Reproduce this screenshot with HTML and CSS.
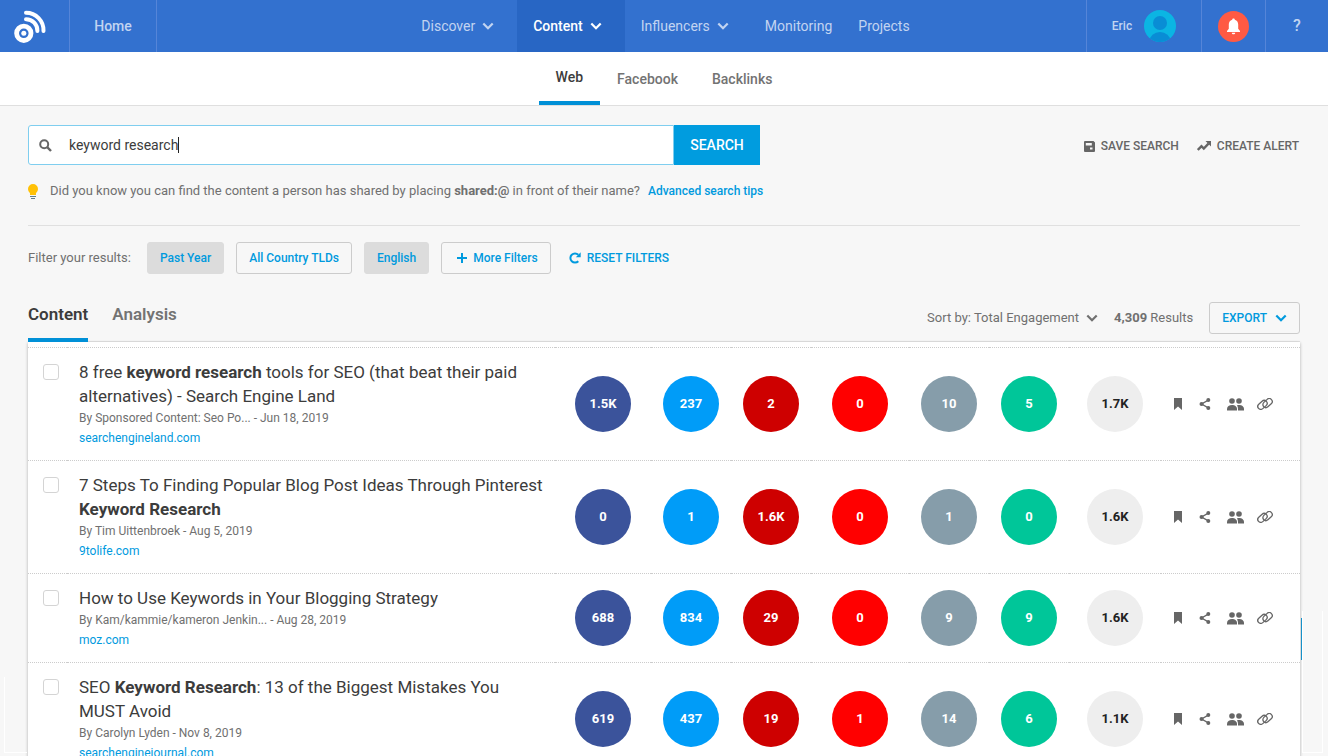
FILE: index.html
```html
<!DOCTYPE html>
<html lang="en">
<head>
<meta charset="utf-8">
<meta name="viewport" content="width=device-width, initial-scale=1">
<title>Content – keyword research</title>
<link rel="stylesheet" href="styles.css">
</head>
<body>
<svg class="sprite" aria-hidden="true">
  <symbol id="chevron" viewBox="0 0 12 8"><path d="M1.300 1.500 6 6.200l4.700-4.700" fill="none" stroke="currentColor" stroke-width="2.200"/></symbol>
  <symbol id="bookmark" viewBox="0 0 8 12"><path d="M0 0h8v12L4 8.500 0 12z" fill="currentColor"/></symbol>
  <symbol id="share" viewBox="0 0 12 12"><g fill="currentColor"><circle cx="2.600" cy="6" r="2.100"/><circle cx="9.300" cy="2.100" r="2"/><circle cx="9.300" cy="9.900" r="2"/></g><path d="M9.300 2.100 2.600 6l6.700 3.900" fill="none" stroke="currentColor" stroke-width="1.300"/></symbol>
  <symbol id="people" viewBox="0 0 17 13"><g fill="currentColor"><circle cx="5" cy="3" r="2.800"/><circle cx="12" cy="3" r="2.800"/><path d="M0 12.500V11c0-2.500 2.300-4 5-4s5 1.500 5 4v1.500z"/><path d="M10 7.300c.6-.2 1.300-.3 2-.3 2.700 0 5 1.500 5 4v1.500h-6V11c0-1.500-.4-2.700-1-3.700z"/></g></symbol>
  <symbol id="link" viewBox="0 0 16 12"><g fill="none" stroke="currentColor" stroke-width="1.300"><rect x="0.200" y="3.900" width="10.500" height="6" rx="3" transform="rotate(-42 5.450 6.900)"/><rect x="5.300" y="2.100" width="10.500" height="6" rx="3" transform="rotate(-42 10.550 5.100)"/></g></symbol>
</svg>

<header class="topbar">
  <div class="topbar-left">
    <a class="logo" href="#" aria-label="Dashboard">
      <svg width="32" height="34" viewBox="0 0 32 34"><g fill="none" stroke="#fff"><circle cx="9.800" cy="24.300" r="7.200" stroke-width="4.800"/><path d="M12 3.800A17.500 17.500 0 0 1 29.500 22" stroke-width="4" stroke-linecap="round"/><path d="M12 10.200A11.400 11.400 0 0 1 23.400 22" stroke-width="4" stroke-linecap="round"/></g><circle cx="9.800" cy="24.300" r="2.500" fill="#fff"/></svg>
    </a>
    <a class="home" href="#">Home</a>
  </div>
  <nav class="mainnav">
    <a class="has-menu" href="#">Discover <svg class="chev"><use href="#chevron"/></svg></a>
    <a class="has-menu active" href="#">Content <svg class="chev"><use href="#chevron"/></svg></a>
    <a class="has-menu" href="#">Influencers <svg class="chev"><use href="#chevron"/></svg></a>
    <a href="#">Monitoring</a>
    <a href="#">Projects</a>
  </nav>
  <div class="topbar-right">
    <a class="user" href="#">Eric
      <svg width="32" height="32" viewBox="0 0 32 32"><clipPath id="face"><circle cx="16" cy="16" r="16"/></clipPath><g clip-path="url(#face)"><path fill="#0bb5e3" d="M0 0h32v32H0z"/><circle cx="16" cy="13" r="7" fill="#098dd5"/><ellipse cx="16" cy="31" rx="10.500" ry="9" fill="#098dd5"/></g></svg>
    </a>
    <button class="alerts" type="button" aria-label="Notifications">
      <svg width="31" height="31" viewBox="0 0 31 31"><circle cx="15.500" cy="15.500" r="15.500" fill="#ff5a43"/><path fill="#fff" d="M15.500 7.500c.8 0 1.300.5 1.300 1.200 2.300.6 3.400 2.500 3.400 4.800v4.300l1.800 2.200v1H9v-1l1.800-2.200v-4.300c0-2.300 1.100-4.200 3.400-4.800 0-.7.5-1.200 1.300-1.200zM13.800 21.800h3.400c0 1-.8 1.500-1.700 1.500s-1.700-.5-1.700-1.500z"/></svg>
    </button>
    <a class="help" href="#">?</a>
  </div>
</header>

<nav class="subnav">
  <a class="active" href="#">Web</a>
  <a href="#">Facebook</a>
  <a href="#">Backlinks</a>
</nav>

<main class="page">
  <div class="search-row">
    <form class="search">
      <label class="search-box">
        <svg width="13" height="13" viewBox="0 0 13 13" aria-hidden="true"><g fill="none" stroke="#666" stroke-width="2"><circle cx="5.200" cy="5.200" r="4"/><path d="m8.200 8.200 3.800 3.800" stroke-width="2.400"/></g></svg>
        <input type="text" value="keyword research" aria-label="Search">
        <span class="caret"></span>
      </label>
      <button type="submit">SEARCH</button>
    </form>
    <div class="search-actions">
      <a href="#"><svg width="11" height="11" viewBox="0 0 11 11"><path fill="#666" fill-rule="evenodd" d="M1 0h8.500L11 1.500V10a1 1 0 0 1-1 1H1a1 1 0 0 1-1-1V1a1 1 0 0 1 1-1zm.8 2v2.500h6V2zM6 6.500v2h2.500v-2z"/></svg>SAVE SEARCH</a>
      <a href="#"><svg width="14" height="10" viewBox="0 0 14 10"><path fill="none" stroke="#666" stroke-width="2.400" d="m.8 9 3.700-3.800 2.300 2.300 4.700-4.800"/><path fill="#666" d="M8.500 0H14v5.500z"/></svg>CREATE ALERT</a>
    </div>
  </div>

  <p class="tip">
    <svg width="10" height="15" viewBox="0 0 10 15"><path fill="#ffc107" d="M5 0a5 5 0 0 1 5 5c0 2-1.200 3-2 4.200V11H2V9.200C1.200 8 0 7 0 5a5 5 0 0 1 5-5z"/><path fill="#607d8b" d="M2 12h6v1H2zM3 14h4v1H3z"/></svg>
    <span>Did you know you can find the content a person has shared by placing <b>shared:@</b> in front of their name?</span>
    <a href="#">Advanced search tips</a>
  </p>

  <div class="filters">
    <span class="filters-label">Filter your results:</span>
    <button class="chip on" type="button">Past Year</button>
    <button class="chip" type="button">All Country TLDs</button>
    <button class="chip on" type="button">English</button>
    <button class="chip more" type="button"><svg width="10" height="10" viewBox="0 0 10 10"><path d="M5 0v10M0 5h10" stroke="currentColor" stroke-width="2"/></svg>More Filters</button>
    <button class="reset" type="button"><svg width="12" height="12" viewBox="0 0 12 12"><path fill="none" stroke="currentColor" stroke-width="2" d="M9.300 9.200A4.600 4.600 0 1 1 9.300 2.800"/><path fill="currentColor" d="M11.700.3v5H6.800z"/></svg>RESET FILTERS</button>
  </div>

  <div class="results-head">
    <nav class="tabs">
      <a class="active" href="#">Content</a>
      <a href="#">Analysis</a>
    </nav>
    <div class="tools">
      <button class="sort" type="button">Sort by: Total Engagement <svg class="chev"><use href="#chevron"/></svg></button>
      <span><b>4,309</b> Results</span>
      <button class="chip export" type="button">EXPORT <svg class="chev"><use href="#chevron"/></svg></button>
    </div>
  </div>

  <table class="results">
    <colgroup><col class="c-check"><col><col class="c-fb"><col class="c-num"><col class="c-num"><col class="c-wide"><col class="c-num"><col class="c-num"><col class="c-total"><col class="c-act"></colgroup>
    <tbody>
      <tr>
        <td class="check"><input type="checkbox" aria-label="Select result"></td>
        <td class="info"><h3>8 free <b>keyword research</b> tools for SEO (that beat their paid alternatives) - Search Engine Land</h3><p>By Sponsored Content: Seo Po... - Jun 18, 2019</p><a href="#">searchengineland.com</a></td>
        <td><span class="dot facebook">1.5K</span></td><td><span class="dot twitter">237</span></td><td><span class="dot pinterest">2</span></td><td><span class="dot reddit">0</span></td><td><span class="dot links">10</span></td><td><span class="dot evergreen">5</span></td><td><span class="dot total">1.7K</span></td>
        <td><div class="actions"><button type="button" aria-label="Bookmark"><svg width="8" height="12"><use href="#bookmark"/></svg></button><button type="button" aria-label="Share"><svg width="12" height="12"><use href="#share"/></svg></button><button type="button" aria-label="View sharers"><svg width="17" height="13"><use href="#people"/></svg></button><button type="button" aria-label="View backlinks"><svg width="16" height="12"><use href="#link"/></svg></button></div></td>
      </tr>
      <tr>
        <td class="check"><input type="checkbox" aria-label="Select result"></td>
        <td class="info"><h3>7 Steps To Finding Popular Blog Post Ideas Through Pinterest <b>Keyword Research</b></h3><p>By Tim Uittenbroek - Aug 5, 2019</p><a href="#">9tolife.com</a></td>
        <td><span class="dot facebook">0</span></td><td><span class="dot twitter">1</span></td><td><span class="dot pinterest">1.6K</span></td><td><span class="dot reddit">0</span></td><td><span class="dot links">1</span></td><td><span class="dot evergreen">0</span></td><td><span class="dot total">1.6K</span></td>
        <td><div class="actions"><button type="button" aria-label="Bookmark"><svg width="8" height="12"><use href="#bookmark"/></svg></button><button type="button" aria-label="Share"><svg width="12" height="12"><use href="#share"/></svg></button><button type="button" aria-label="View sharers"><svg width="17" height="13"><use href="#people"/></svg></button><button type="button" aria-label="View backlinks"><svg width="16" height="12"><use href="#link"/></svg></button></div></td>
      </tr>
      <tr>
        <td class="check"><input type="checkbox" aria-label="Select result"></td>
        <td class="info"><h3>How to Use Keywords in Your Blogging Strategy</h3><p>By Kam/kammie/kameron Jenkin... - Aug 28, 2019</p><a href="#">moz.com</a></td>
        <td><span class="dot facebook">688</span></td><td><span class="dot twitter">834</span></td><td><span class="dot pinterest">29</span></td><td><span class="dot reddit">0</span></td><td><span class="dot links">9</span></td><td><span class="dot evergreen">9</span></td><td><span class="dot total">1.6K</span></td>
        <td><div class="actions"><button type="button" aria-label="Bookmark"><svg width="8" height="12"><use href="#bookmark"/></svg></button><button type="button" aria-label="Share"><svg width="12" height="12"><use href="#share"/></svg></button><button type="button" aria-label="View sharers"><svg width="17" height="13"><use href="#people"/></svg></button><button type="button" aria-label="View backlinks"><svg width="16" height="12"><use href="#link"/></svg></button></div></td>
      </tr>
      <tr>
        <td class="check"><input type="checkbox" aria-label="Select result"></td>
        <td class="info"><h3>SEO <b>Keyword Research</b>: 13 of the Biggest Mistakes You MUST Avoid</h3><p>By Carolyn Lyden - Nov 8, 2019</p><a href="#">searchenginejournal.com</a></td>
        <td><span class="dot facebook">619</span></td><td><span class="dot twitter">437</span></td><td><span class="dot pinterest">19</span></td><td><span class="dot reddit">1</span></td><td><span class="dot links">14</span></td><td><span class="dot evergreen">6</span></td><td><span class="dot total">1.1K</span></td>
        <td><div class="actions"><button type="button" aria-label="Bookmark"><svg width="8" height="12"><use href="#bookmark"/></svg></button><button type="button" aria-label="Share"><svg width="12" height="12"><use href="#share"/></svg></button><button type="button" aria-label="View sharers"><svg width="17" height="13"><use href="#people"/></svg></button><button type="button" aria-label="View backlinks"><svg width="16" height="12"><use href="#link"/></svg></button></div></td>
      </tr>
    </tbody>
  </table>
</main>
<div class="edge edge-left"></div>
<div class="edge edge-right"></div>
<div class="edge-mark"></div>
</body>
</html>
```

FILE: styles.css
```css
* { box-sizing: border-box; }
html, body { height: 100%; }
body { margin: 0; overflow: hidden; background: #f7f7f7; color: #666; font: 13px/20px Roboto, "Liberation Sans", sans-serif; }
a { color: inherit; text-decoration: none; }
button { margin: 0; padding: 0; border: 0; background: none; color: inherit; font: inherit; cursor: pointer; }
svg { flex: none; display: block; }
p, h3 { margin: 0; }
.sprite { position: absolute; width: 0; height: 0; }
.chev { width: 12px; height: 8px; }

.topbar { display: grid; grid-template-columns: 1fr auto 1fr; height: 52px; background: #3371cf; color: #c2d4f1; font-size: 14px; }
.topbar-left, .topbar-right, .mainnav { display: flex; }
.topbar-right { justify-content: flex-end; }
.topbar a, .alerts { display: flex; align-items: center; justify-content: center; }
.logo { width: 70px; padding-right: 10px; border-right: 1px solid #5585d8; }
.home { width: 87px; border-right: 1px solid #5585d8; font-weight: 500; }
.mainnav a { padding: 0 13px; }
.mainnav .has-menu { gap: 7px; padding: 0 23px 0 16px; }
.mainnav .active { background: #2866c4; color: #fff; font-weight: 500; }
.topbar-right > * { border-left: 1px solid #5585d8; }
.user { gap: 12px; width: 115px; font-size: 12px; font-weight: 500; }
.alerts { width: 64px; }
.help { width: 63px; font-size: 16px; font-weight: 500; }

.subnav { display: flex; justify-content: center; height: 54px; background: #fff; border-bottom: 1px solid #dfdfdf; font-size: 14px; font-weight: 500; color: #737373; }
.subnav a { display: flex; align-items: center; padding: 0 17px; }
.subnav .active { color: #3c3c3c; border-bottom: 4px solid #0090d7; }

.page { padding: 19px 28px 0; }
.search-row { display: flex; justify-content: space-between; align-items: center; gap: 28px; }
.search { display: flex; flex: 0 1 732px; height: 40px; }
.search-box { display: flex; flex: 1; align-items: center; padding-left: 10px; background: #fff; border: 1px solid #7fceef; border-radius: 3px 0 0 3px; cursor: text; }
.search-box input { field-sizing: content; height: 36px; margin-left: 17px; padding: 0; border: 0; outline: 0; background: none; color: #3c3c3c; caret-color: transparent; font: inherit; font-size: 14px; }
.caret { width: 1px; height: 16px; background: #222; }
.search button { width: 86px; background: #009cdf; color: #fff; font-size: 14px; font-weight: 500; }
.search-actions { display: flex; gap: 18px; padding: 2px 1px 0 0; font-size: 12px; font-weight: 500; }
.search-actions a { display: flex; align-items: center; gap: 6px; }

.tip { display: flex; align-items: center; gap: 8px; margin-top: 16px; padding-bottom: 24px; border-bottom: 1px solid #e0e0e0; color: #707070; }
.tip svg { margin-right: 4px; }
.tip a { color: #009ade; font-size: 12px; font-weight: 500; }

.filters { display: flex; align-items: center; margin-top: 16px; gap: 12px; }
.filters-label { margin-right: 4px; color: #707070; }
.chip { display: flex; align-items: center; justify-content: center; gap: 6px; height: 32px; padding: 0 12px; border: 1px solid #ccc; border-radius: 3px; color: #009ade; font-size: 12px; font-weight: 500; }
.chip.on { background: #dcdcdc; border-color: #dcdcdc; }
.more { padding-left: 15px; }
.export { gap: 8px; }
.reset { display: flex; align-items: center; gap: 6px; margin-left: 6px; color: #009ade; font-size: 12px; font-weight: 500; }

.results-head { display: flex; justify-content: space-between; margin-top: 28px; border-bottom: 1px solid #e4e4e4; }
.tabs { display: flex; gap: 24px; height: 40px; margin-bottom: -1px; font-size: 17px; font-weight: 600; line-height: 24px; color: #737373; }
.tabs a { height: 40px; }
.tabs .active { color: #3c3c3c; border-bottom: 4px solid #0090d7; }
.tools { display: flex; align-items: center; gap: 16px; height: 32px; color: #707070; }
.sort { display: flex; align-items: center; gap: 7px; }

.results { width: 100%; padding-top: 5px; table-layout: fixed; border-spacing: 0; background: #fff; box-shadow: 0 1px 3px #0000004d; }
.c-check { width: 39px; }
.c-fb { width: 96px; }
.c-num { width: 80px; }
.c-wide { width: 98px; }
.c-total { width: 92px; }
.c-act { width: 139px; }
.results td { padding: 0; border-top: 1px dotted #ccc; vertical-align: middle; }
.results .check { padding: 16px 0 0 15px; vertical-align: top; }
.check input { display: block; appearance: none; width: 16px; height: 16px; margin: 0; border: 1px solid #d4d4d4; border-radius: 3px; background: #fff; }
.results .info { padding: 12px 8px 12px 12px; }
.info h3 { color: #3c3c3c; font-size: 17px; font-weight: 400; line-height: 24px; }
.info p { font-size: 12px; color: #707070; }
.info a { display: block; width: fit-content; color: #009ade; font-size: 12px; }
.dot { display: flex; align-items: center; justify-content: center; width: 56px; height: 56px; margin: 0 auto; border-radius: 50%; color: #fff; font-weight: 700; }
.facebook { background: #3b539b; }
.twitter { background: #009cf8; }
.pinterest { background: #ce0000; }
.reddit { background: #ff0000; }
.links { background: #869daa; }
.evergreen { background: #00c699; }
.total { background: #eee; color: #222; }
.actions { display: grid; grid-template-columns: 25px 28px 30px 16px; align-items: center; justify-items: start; padding-left: 13px; }

.edge { position: fixed; bottom: 3px; border: 1px solid #fff; border-top: 0; }
.edge-left { left: 4px; width: 23px; height: 76px; border-right: 0; }
.edge-right { right: 5px; width: 21px; height: 142px; background: #f7f7f7; }
.edge-mark { position: fixed; right: 26px; bottom: 96px; width: 1px; height: 42px; background: #1691c9; }
```
